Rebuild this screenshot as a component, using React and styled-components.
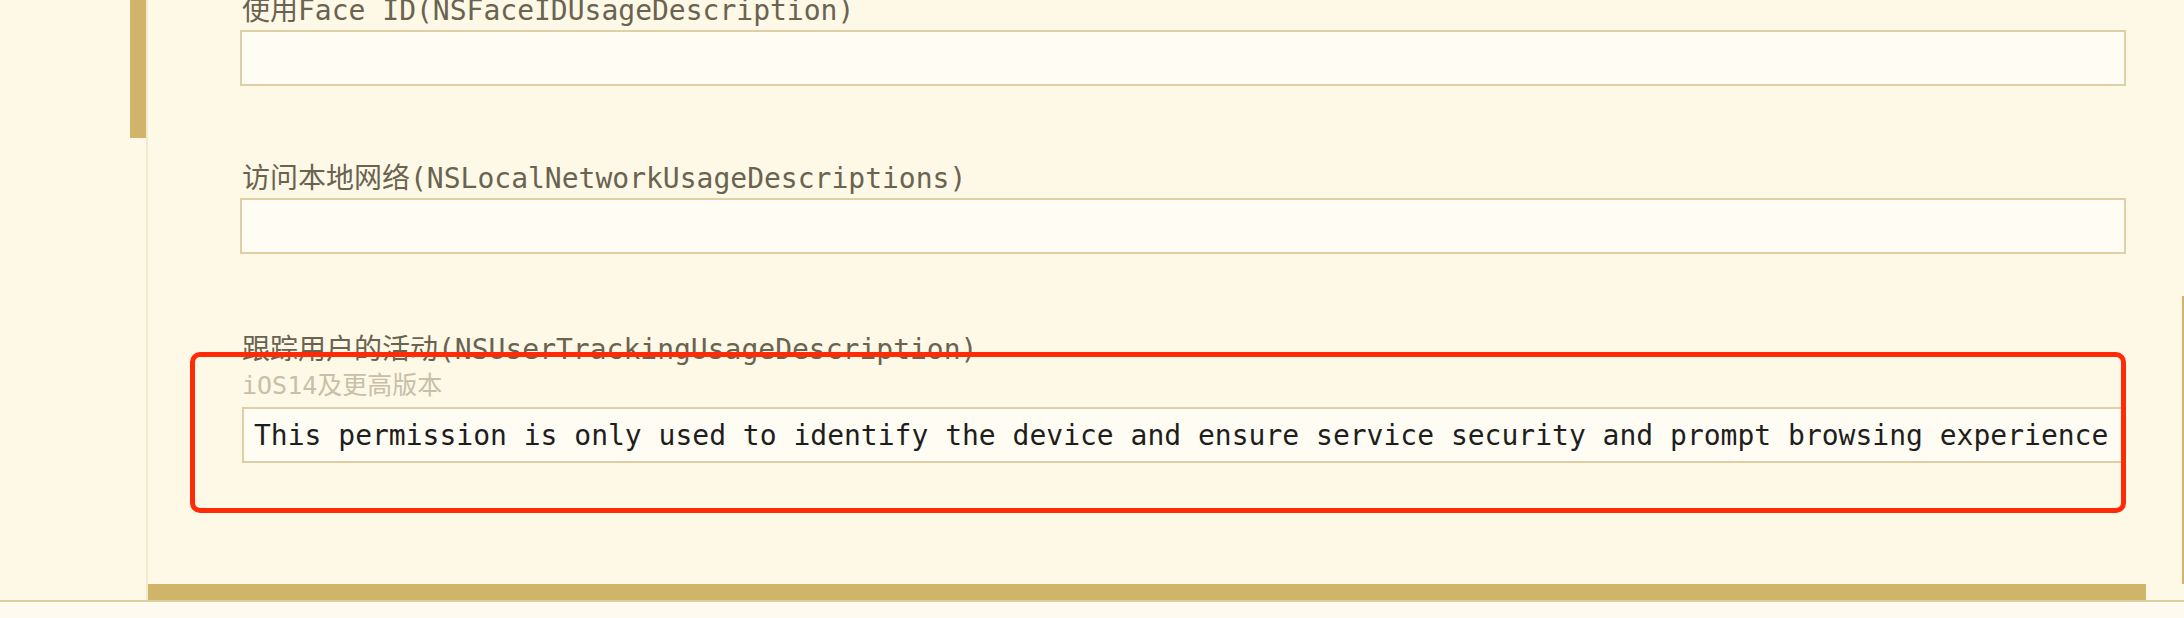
import React from 'react';
import styled, { createGlobalStyle } from 'styled-components';

const GlobalStyle = createGlobalStyle`
  html, body {
    margin: 0;
    padding: 0;
    background: #fef8e7;
    overflow: hidden;
  }
`;

const mono = `"DejaVu Sans Mono", "Noto Sans CJK SC", monospace`;

const Frame = styled.div`
  height: 618px;
  display: flex;
  flex-direction: column;
  background: #fef8e7;
`;

const Workspace = styled.div`
  height: 600px;
  display: flex;
`;

const Sidebar = styled.aside`
  width: 146px;
  flex-shrink: 0;
  border-right: 2px solid #f3ebcf;
  display: flex;
  justify-content: flex-end;
  align-items: flex-start;
`;

const Thumb = styled.div`
  background: #cfb46a;
  width: ${(p) => p.$w};
  height: ${(p) => p.$h};
  flex-shrink: 0;
`;

const Main = styled.main`
  flex: 1;
  position: relative;
  display: flex;
  flex-direction: column;
  overflow: hidden;
`;

const MainBody = styled.div`
  flex: 1;
  display: flex;
  min-height: 0;
`;

const Form = styled.div`
  flex: 1;
  margin-top: -6px;
  padding: 0 56px 0 92px;
  display: flex;
  flex-direction: column;
  gap: 76px;
`;

const VTrack = styled.div`
  width: 2px;
  padding-top: 296px;
  display: flex;
  flex-direction: column;
`;

const HTrack = styled.div`
  height: 16px;
  display: flex;
`;

const Field = styled.div`
  display: flex;
  flex-direction: column;
  margin-top: ${(p) => (p.$extra ? '3px' : '0')};
`;

const Label = styled.div`
  font-family: ${mono};
  font-size: 28px;
  line-height: 34px;
  color: #6a634f;
  white-space: nowrap;
  margin: 0 0 2px 2px;
`;

const Hint = styled.div`
  font-family: ${mono};
  font-size: 25px;
  line-height: 32px;
  color: #c8bfa6;
  white-space: nowrap;
  margin: 1px 0 5px 2px;
`;

const TextInput = styled.input`
  box-sizing: border-box;
  height: 56px;
  width: ${(p) => (p.$inset ? 'calc(100% - 2px)' : '100%')};
  margin-left: ${(p) => (p.$inset ? '2px' : '0')};
  padding: 0 10px;
  border: 2px solid #ddd0a6;
  border-radius: 0;
  background: #fffcf3;
  font-family: ${mono};
  font-size: 28px;
  color: #1e1e1e;
  outline: none;
`;

const Highlight = styled.div`
  position: absolute;
  left: 42px;
  top: 352px;
  width: 1936px;
  height: 161px;
  box-sizing: border-box;
  border: 5px solid #ff2b06;
  border-radius: 10px;
  pointer-events: none;
`;

const StatusStrip = styled.div`
  flex: 1;
  border-top: 2px solid #dccf9f;
  background: #fefaef;
`;

const fields = [
  { label: '使用Face ID(NSFaceIDUsageDescription)', value: '' },
  { label: '访问本地网络(NSLocalNetworkUsageDescriptions)', value: '' },
  {
    label: '跟踪用户的活动(NSUserTrackingUsageDescription)',
    hint: 'iOS14及更高版本',
    value:
      'This permission is only used to identify the device and ensure service security and prompt browsing experience',
  },
];

export default function App() {
  return (
    <Frame>
      <GlobalStyle />
      <Workspace>
        <Sidebar>
          <Thumb $w="16px" $h="138px" />
        </Sidebar>
        <Main>
          <MainBody>
            <Form>
              {fields.map((f) => (
                <Field key={f.label} $extra={!!f.hint}>
                  <Label>{f.label}</Label>
                  {f.hint && <Hint>{f.hint}</Hint>}
                  <TextInput readOnly value={f.value} $inset={!!f.hint} />
                </Field>
              ))}
            </Form>
            <VTrack>
              <Thumb $w="2px" $h="288px" />
            </VTrack>
          </MainBody>
          <HTrack>
            <Thumb $w="1998px" $h="16px" />
          </HTrack>
          <Highlight />
        </Main>
      </Workspace>
      <StatusStrip />
    </Frame>
  );
}
